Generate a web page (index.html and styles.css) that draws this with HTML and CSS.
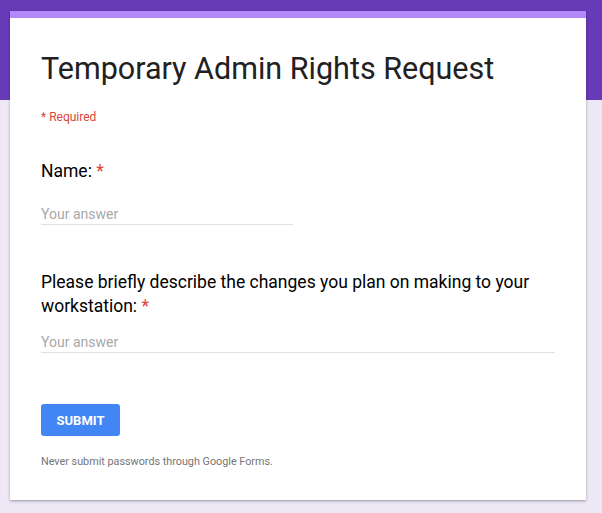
FILE: index.html
```html
<!DOCTYPE html>
<html>
<head>
<meta charset="utf-8">
<link rel="stylesheet" href="styles.css">
</head>
<body>
<div class="card">
  <h1 class="title">Temporary Admin Rights Request</h1>
  <div class="required-note">* Required</div>
  <div class="item item-first">
    <div class="item-title">Name: <span class="star">*</span></div>
    <div class="answer short">Your answer</div>
  </div>
  <div class="item item-second">
    <div class="item-title">Please briefly describe the changes you plan on making to your workstation: <span class="star">*</span></div>
    <div class="answer long">Your answer</div>
  </div>
  <button class="submit">SUBMIT</button>
  <div class="footer-note">Never submit passwords through Google Forms.</div>
</div>
</body>
</html>
```
FILE: styles.css
```css
html, body {
  margin: 0;
  padding: 0;
}
body {
  width: 602px;
  height: 513px;
  overflow: hidden;
  background: linear-gradient(to bottom, #673ab7 0, #673ab7 100px, #ede7f6 100px, #ede7f6 100%);
  font-family: Roboto, "Noto Sans", Arial, sans-serif;
  padding-top: 11px;
  box-sizing: border-box;
}
.card {
  margin-left: 10px;
  width: 576px;
  height: 489px;
  box-sizing: border-box;
  background: #fff;
  border-top: 7px solid #b388fb;
  box-shadow: 0 1px 3px rgba(0,0,0,0.25), 0 1px 1px rgba(0,0,0,0.1);
  padding: 31px 31px 0 31px;
}
.title {
  margin: 0;
  font-size: 30.5px;
  font-weight: 400;
  line-height: 40px;
  color: #212121;
}
.required-note {
  margin-top: 20px;
  font-size: 12px;
  line-height: 16px;
  color: #db4437;
}
.item-first {
  margin-top: 34px;
}
.item-second {
  margin-top: 45px;
}
.item-title {
  font-size: 17.5px;
  line-height: 24px;
  color: #000;
}
.star {
  color: #db4437;
}
.answer {
  font-size: 14px;
  line-height: 20px;
  color: #a8a8a8;
  border-bottom: 1px solid #e0e0e0;
}
.answer.short {
  margin-top: 21px;
  width: 252px;
}
.answer.long {
  margin-top: 14px;
  width: 514px;
}
.submit {
  display: block;
  margin-top: 51px;
  width: 79px;
  height: 32px;
  border: none;
  border-radius: 3px;
  background: #4285f4;
  color: #fff;
  font-family: Roboto, Arial, sans-serif;
  font-weight: 700;
  font-size: 13px;
  padding: 0;
}
.footer-note {
  margin-top: 19px;
  font-size: 10.8px;
  line-height: 14px;
  color: #757575;
}
```
